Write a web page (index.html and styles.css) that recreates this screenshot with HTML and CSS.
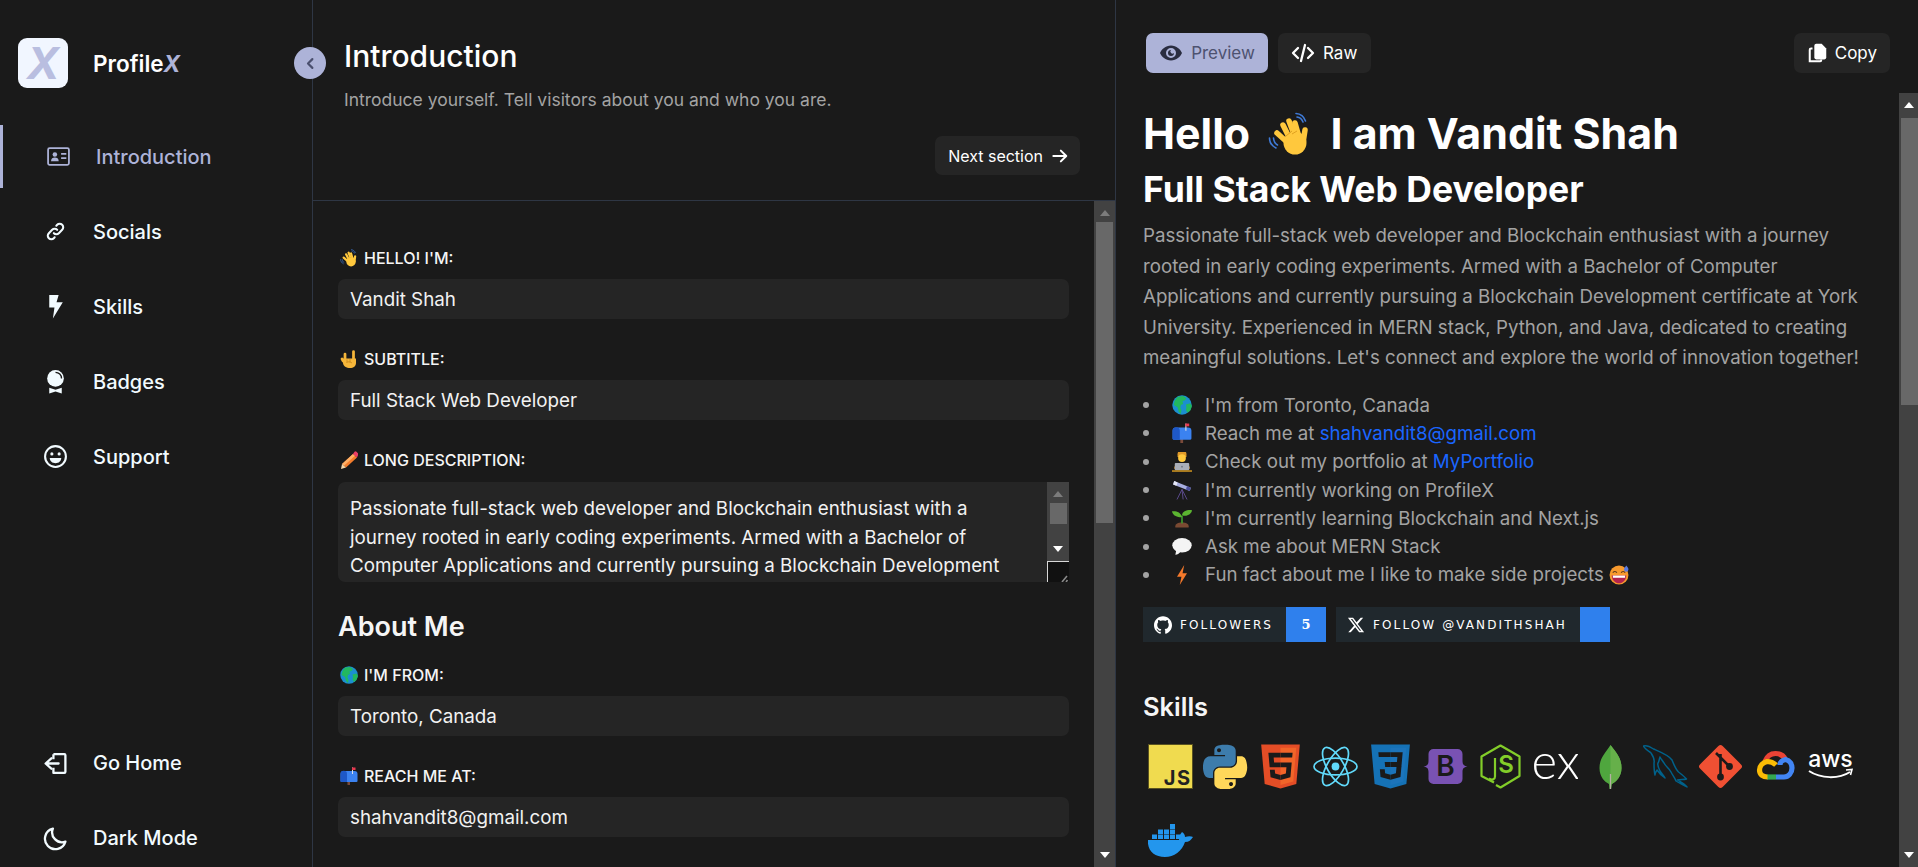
FILE: index.html
```html
<!DOCTYPE html>
<html lang="en">
<head>
<meta charset="utf-8">
<title>ProfileX</title>
<link rel="stylesheet" href="styles.css">
</head>
<body>
<svg class="defs" aria-hidden="true">
  <symbol id="e-wave" viewBox="0 0 44 44">
    <g fill="none" stroke="#ffc83d" stroke-linecap="round">
      <path stroke-width="5.5" d="M19 30 9 21"/>
      <path stroke-width="5.5" d="M22 27 15 13"/>
      <path stroke-width="5.5" d="M27 25 21 9"/>
      <path stroke-width="5.5" d="M31 25 27 11"/>
      <path stroke-width="5.5" d="M35 31 37 18"/>
    </g>
    <circle cx="27" cy="31" r="11.5" fill="#ffc83d"/>
    <path d="M18 24 24 19M24 22 29 19" stroke="#e0a020" stroke-width="1" fill="none"/>
    <g fill="none" stroke="#3f7ad6" stroke-width="1.6" stroke-linecap="round">
      <path d="M28 1.5c4 .3 8 3.2 9.5 7.5"/>
      <path d="M29 5c3 .3 5 2.5 6 5"/>
      <path d="M1.5 26c0 4 2.500 8 6.500 10"/>
      <path d="M5.500 26c.2 3 1.500 5.500 4 7"/>
    </g>
  </symbol>
  <symbol id="e-globe" viewBox="0 0 36 36">
    <circle cx="18" cy="18" r="17.500" fill="#1b8fd0"/>
    <path fill="#22b85f" d="M10 3 20 2l6 4-3 4-4 1 1 5-4 2-1 5 2 4-1 7-4-4-2-8-7-4 2-8zM25 17l8-2 3 5-3 8-5 4-3-5 1-5z"/>
  </symbol>
  <symbol id="e-mail" viewBox="0 0 36 36">
    <rect x="15" y="28" width="5" height="8" fill="#7a4a3a"/>
    <path fill="#3b82f0" d="M1 14a6 6 0 0 1 6-6h22a6 6 0 0 1 6 6v14a2 2 0 0 1-2 2H3a2 2 0 0 1-2-2z"/>
    <path fill="#1e58c8" d="M1 14a6 6 0 0 1 13 0v16H3a2 2 0 0 1-2-2z"/>
    <rect x="24" y="1" width="2" height="13" fill="#d9dde5"/>
    <rect x="24" y="1" width="7" height="5" fill="#e8384f"/>
  </symbol>
  <symbol id="e-dev" viewBox="0 0 36 36">
    <path fill="#e09a2a" d="M10 4a8 8 0 0 1 16 0v5H10z"/>
    <circle cx="18" cy="11" r="7" fill="#ffc83d"/>
    <path fill="#f2a93a" d="M4 30c0-7 7-10 14-10s14 3 14 10z"/>
    <rect x="5" y="20" width="26" height="13" rx="1.500" fill="#a9aeb8"/>
    <circle cx="18" cy="26.500" r="1.600" fill="#70757f"/>
    <path fill="#e0a020" d="M0 33h36v2.500H0z"/>
  </symbol>
  <symbol id="e-scope" viewBox="0 0 36 36">
    <path d="M18 17 9 35M18 17l2 18M18 17l9 18" stroke="#5a4a8a" stroke-width="1.800" fill="none"/>
    <path fill="#a8aee0" d="M4 2 34 14l-2 6L2 8z"/>
    <path fill="#e6e8f5" d="M4 2 10 4.400 8 10.400 2 8z"/>
    <path fill="#4b4f9a" d="M27 11l7 3-2 6-7-3z"/>
  </symbol>
  <symbol id="e-seed" viewBox="0 0 36 36">
    <path fill="#7a4a32" d="M6 33c0-5 5-7 12-7s12 2 12 7v2H6z"/>
    <path fill="none" stroke="#3e9a2e" stroke-width="3" d="M18 28V14"/>
    <path fill="#5cb531" d="M18 16C16 8 8 5 0 6c1 7 9 12 18 10zM18 13c1-7 9-10 18-9-1 7-9 12-18 9z"/>
  </symbol>
  <symbol id="e-bubble" viewBox="0 0 36 36">
    <ellipse cx="18" cy="15" rx="17.500" ry="13" fill="#f4f4f4"/>
    <path fill="#f4f4f4" d="M8 22 6 32c4 0 8-3 10-7z"/>
  </symbol>
  <symbol id="e-zap" viewBox="0 0 36 36">
    <path fill="#f4792b" d="M22 0 9 21h8l-3 15 13-21h-8z"/>
  </symbol>
  <symbol id="e-grin" viewBox="0 0 36 36">
    <circle cx="18" cy="18" r="17" fill="#f79a2e"/>
    <path d="M7 14c1-3 6-3 7 0M22 14c1-3 6-3 7 0" fill="none" stroke="#5c3a1e" stroke-width="2"/>
    <path fill="#b3234e" d="M5 19h26c0 8-6 14-13 14S5 27 5 19z"/>
    <path fill="#fff" d="M7 19h22v4H7z"/>
    <path fill="#5b7be0" d="M31 1c3 3 4 5 4 7a4 4 0 0 1-8 0c0-2 2-4 4-7z"/>
  </symbol>
  <symbol id="e-metal" viewBox="0 0 36 36">
    <g stroke="#f5b63a" stroke-width="5.500" stroke-linecap="round" fill="none">
      <path d="M10 20V8M27 20V3M6 22l-2-4"/>
    </g>
    <path fill="#f5b63a" d="M6 17h26v9c0 6-5 10-12 10S6 32 6 26z"/>
    <path d="M14 19v6M20 18v7M13 25c3-2 7-2 11 1" stroke="#c4841a" stroke-width="1.500" fill="none"/>
  </symbol>
  <symbol id="e-pencil" viewBox="0 0 36 36">
    <path fill="#f47d2c" d="M26 6 34 13 12 33 4 26z"/>
    <path fill="#ffb066" d="M26 6l4 3.500L8 29.500 4 26z"/>
    <path fill="#ea3d64" d="M29 1.500a3 3 0 0 1 4 0l3 3a3 3 0 0 1 0 4l-2 4.500-8-7z"/>
    <path fill="#f6d7a8" d="M4 26l8 7-10 3z"/>
  </symbol>
</svg>

<div class="app">
  <aside class="sidebar">
    <div class="brand">
      <div class="brand-logo">X</div>
      <div class="brand-name">Profile<em>X</em></div>
    </div>
    <button class="collapse" aria-label="Collapse">
      <svg viewBox="0 0 24 24" width="15" height="15" fill="none" stroke="#4a4f6e" stroke-width="3.400" stroke-linecap="round" stroke-linejoin="round"><path d="M15 5l-7 7 7 7"/></svg>
    </button>
    <nav class="nav">
      <a class="nav-item active">
        <svg class="nav-icon" viewBox="0 0 24 24"><rect x="2" y="4" width="20" height="16" rx="1.500" fill="none" stroke="currentColor" stroke-width="1.700"/><circle cx="8.500" cy="10" r="2.200" fill="currentColor"/><path d="M4.800 16.500c0-2.500 1.700-3.500 3.700-3.500s3.700 1 3.700 3.500z" fill="currentColor"/><path d="M14.500 9.500h5M14.500 13.500h5" stroke="currentColor" stroke-width="1.800"/></svg>
        <span>Introduction</span>
      </a>
      <a class="nav-item">
        <svg class="nav-icon" viewBox="-3 -3 30 30" fill="none" stroke="currentColor" stroke-width="2.500" stroke-linecap="round"><path d="M10 14a4.200 4.200 0 0 0 6 0l4-4a4.200 4.200 0 0 0-6-6l-1 1"/><path d="M14 10a4.200 4.200 0 0 0-6 0l-4 4a4.200 4.200 0 0 0 6 6l1-1"/></svg>
        <span>Socials</span>
      </a>
      <a class="nav-item">
        <svg class="nav-icon" viewBox="0 0 24 24" fill="currentColor"><path d="M6 1h9l-2 7h6L9.500 23.500 11 13H6z"/></svg>
        <span>Skills</span>
      </a>
      <a class="nav-item">
        <svg class="nav-icon" viewBox="0 0 24 24"><circle cx="12" cy="9" r="8" fill="currentColor"/><path d="M12 3.200a5.800 5.800 0 0 1 5.800 5.800" fill="none" stroke="#1a1a1a" stroke-width="1.300"/><path d="M6 18l6 2 6-2v5.500l-6-2-6 2z" fill="currentColor"/></svg>
        <span>Badges</span>
      </a>
      <a class="nav-item">
        <svg class="nav-icon" viewBox="0 0 24 24" fill="none" stroke="currentColor" stroke-width="2"><circle cx="12" cy="12" r="10"/><circle cx="8.500" cy="9.500" r="1.500" fill="currentColor" stroke="none"/><circle cx="15.500" cy="9.500" r="1.500" fill="currentColor" stroke="none"/><path d="M6.500 13.500h11c0 3-2.500 5-5.500 5s-5.500-2-5.500-5z" fill="currentColor" stroke="none"/></svg>
        <span>Support</span>
      </a>
    </nav>
    <nav class="nav nav-bottom">
      <a class="nav-item">
        <svg class="nav-icon" viewBox="0 0 24 24" fill="none" stroke="currentColor" stroke-width="2.200" stroke-linejoin="round"><path d="M10 3h10.500a1 1 0 0 1 1 1v16a1 1 0 0 1-1 1H10v-5M10 8V3"/><path d="M15 12H3M8 7l-5.500 5L8 17" stroke-linecap="round"/></svg>
        <span>Go Home</span>
      </a>
      <a class="nav-item">
        <svg class="nav-icon" viewBox="0 0 24 24" fill="none" stroke="currentColor" stroke-width="2.200" stroke-linejoin="round"><path d="M9.500 2.500a10 10 0 1 0 12 12.500A9.500 9.500 0 0 1 9.500 2.500z"/></svg>
        <span>Dark Mode</span>
      </a>
    </nav>
  </aside>

  <main class="editor">
    <header class="editor-head">
      <h1 class="editor-title">Introduction</h1>
      <p class="editor-sub">Introduce yourself. Tell visitors about you and who you are.</p>
      <div class="editor-actions">
        <button class="btn btn-next">Next section
          <svg viewBox="0 0 24 24" width="20" height="20" fill="none" stroke="currentColor" stroke-width="2.400" stroke-linecap="round" stroke-linejoin="round"><path d="M4 12h15M13 5.500 19.500 12 13 18.500"/></svg>
        </button>
      </div>
    </header>
    <div class="editor-body">
      <form class="form">
        <label class="label"><svg class="emo"><use href="#e-wave"/></svg>HELLO! I'M:</label>
        <div class="field">Vandit Shah</div>
        <label class="label"><svg class="emo"><use href="#e-metal"/></svg>SUBTITLE:</label>
        <div class="field">Full Stack Web Developer</div>
        <label class="label"><svg class="emo"><use href="#e-pencil"/></svg>LONG DESCRIPTION:</label>
        <div class="area">
          <div class="area-text">Passionate full-stack web developer and Blockchain enthusiast with a journey rooted in early coding experiments. Armed with a Bachelor of Computer Applications and currently pursuing a Blockchain Development</div>
          <div class="area-side">
            <div class="bar bar-small">
              <i class="arrow up dim"></i>
              <b class="thumb small"></b>
              <i class="arrow down"></i>
            </div>
            <div class="resizer"><svg viewBox="0 0 21 21" width="21" height="21"><path d="M14 20l5-6M18 20l1.500-2" stroke="#8a8a8a" stroke-width="1.600"/></svg></div>
          </div>
        </div>
        <h2 class="form-head">About Me</h2>
        <label class="label"><svg class="emo"><use href="#e-globe"/></svg>I'M FROM:</label>
        <div class="field">Toronto, Canada</div>
        <label class="label"><svg class="emo"><use href="#e-mail"/></svg>REACH ME AT:</label>
        <div class="field">shahvandit8@gmail.com</div>
      </form>
      <div class="bar bar-main">
        <i class="arrow up dim"></i>
        <b class="thumb thumb-form"></b>
        <i class="arrow down"></i>
      </div>
    </div>
  </main>

  <section class="preview">
    <div class="preview-tools">
      <button class="btn btn-tool btn-on">
        <svg viewBox="0 0 24 24" width="24" height="24"><path fill="#2a2d40" fill-rule="evenodd" d="M12 4.500C6.500 4.500 2.500 8.500 1 12c1.500 3.500 5.500 7.500 11 7.500S21.500 15.500 23 12c-1.500-3.500-5.500-7.500-11-7.500zM12 17a5 5 0 1 1 0-10 5 5 0 0 1 0 10zm0-8a3 3 0 1 0 3 3 1.500 1.500 0 0 1-3-3z"/></svg>
        <span class="btn-on-text">Preview</span>
      </button>
      <button class="btn btn-tool btn-raw">
        <svg viewBox="0 0 24 24" width="24" height="24" fill="none" stroke="currentColor" stroke-width="2.300" stroke-linecap="round" stroke-linejoin="round"><path d="M7 7l-5 5 5 5M17 7l5 5-5 5M14 4l-4 16"/></svg>
        Raw
      </button>
      <button class="btn btn-tool btn-copy">
        <svg viewBox="0 0 24 24" width="22" height="22"><path fill="#fff" d="M10 2h6l5 5v10a2 2 0 0 1-2 2h-9a2 2 0 0 1-2-2V4a2 2 0 0 1 2-2z"/><path fill="none" stroke="#fff" stroke-width="2.200" d="M6 7H4.500a1.500 1.500 0 0 0-1.500 1.500V21h11.500a1 1 0 0 0 1-1v-1"/></svg>
        Copy
      </button>
    </div>
    <div class="preview-body">
      <article class="doc">
        <h1 class="doc-h1">Hello <svg class="emo-big"><use href="#e-wave"/></svg> I am Vandit Shah</h1>
        <h2 class="doc-h2">Full Stack Web Developer</h2>
        <p class="doc-p">Passionate full-stack web developer and Blockchain enthusiast with a journey rooted in early coding experiments. Armed with a Bachelor of Computer Applications and currently pursuing a Blockchain Development certificate at York University. Experienced in MERN stack, Python, and Java, dedicated to creating meaningful solutions. Let's connect and explore the world of innovation together!</p>
        <ul class="doc-list">
          <li><svg class="emo-list"><use href="#e-globe"/></svg>I'm from Toronto, Canada</li>
          <li><svg class="emo-list"><use href="#e-mail"/></svg>Reach me at&nbsp;<a class="link">shahvandit8@gmail.com</a></li>
          <li><svg class="emo-list"><use href="#e-dev"/></svg>Check out my portfolio at&nbsp;<a class="link">MyPortfolio</a></li>
          <li><svg class="emo-list"><use href="#e-scope"/></svg>I'm currently working on ProfileX</li>
          <li><svg class="emo-list"><use href="#e-seed"/></svg>I'm currently learning Blockchain and Next.js</li>
          <li><svg class="emo-list"><use href="#e-bubble"/></svg>Ask me about MERN Stack</li>
          <li><svg class="emo-list"><use href="#e-zap"/></svg>Fun fact about me I like to make side projects&nbsp;<svg class="emo-inline"><use href="#e-grin"/></svg></li>
        </ul>
        <div class="badges">
          <div class="badge">
            <span class="badge-key">
              <svg viewBox="0 0 24 24" width="18" height="18" fill="#fff"><path d="M12 .297c-6.630 0-12 5.373-12 12 0 5.303 3.438 9.800 8.205 11.385.6.113.82-.258.82-.577 0-.285-.01-1.040-.015-2.040-3.338.724-4.042-1.610-4.042-1.610C4.422 18.070 3.633 17.700 3.633 17.700c-1.087-.744.084-.729.084-.729 1.205.084 1.838 1.236 1.838 1.236 1.070 1.835 2.809 1.305 3.495.998.108-.776.417-1.305.76-1.605-2.665-.3-5.466-1.332-5.466-5.930 0-1.310.465-2.380 1.235-3.220-.135-.303-.54-1.523.105-3.176 0 0 1.005-.322 3.300 1.230.96-.267 1.980-.399 3-.405 1.020.006 2.040.138 3 .405 2.280-1.552 3.285-1.230 3.285-1.230.645 1.653.24 2.873.12 3.176.765.84 1.230 1.910 1.230 3.220 0 4.610-2.805 5.625-5.475 5.920.42.36.81 1.096.81 2.220 0 1.606-.015 2.896-.015 3.286 0 .315.21.69.825.57C20.565 22.092 24 17.592 24 12.297c0-6.627-5.373-12-12-12"/></svg>
              FOLLOWERS
            </span>
            <span class="badge-val">5</span>
          </div>
          <div class="badge">
            <span class="badge-key">
              <svg viewBox="0 0 24 24" width="18" height="18" fill="#fff"><path d="M18.244 2.250h3.308l-7.227 8.260 8.502 11.240H16.170l-5.214-6.817L4.990 21.750H1.680l7.730-8.835L1.254 2.250H8.080l4.713 6.231zm-1.161 17.520h1.833L7.084 4.126H5.117z"/></svg>
              FOLLOW @VANDITHSHAH
            </span>
            <span class="badge-val badge-empty"></span>
          </div>
        </div>
        <h3 class="doc-h3">Skills</h3>
        <div class="skills">
          <svg class="skill" viewBox="0 0 45 45"><rect x=".5" y=".5" width="44" height="44" fill="#f0db4f" stroke="#5a5320"/><text x="43.500" y="41" class="t-js" text-anchor="end">JS</text></svg>
          <svg class="skill" viewBox="13 0 104 104"><path fill="#3d7cac" d="M63.391 1.988c-4.222.02-8.252.379-11.800 1.007-10.450 1.846-12.346 5.710-12.346 12.837v9.411h24.693v3.137H29.977c-7.176 0-13.460 4.313-15.426 12.521-2.268 9.405-2.368 15.275 0 25.096 1.755 7.311 5.947 12.519 13.124 12.519h8.491V67.234c0-8.151 7.051-15.340 15.426-15.340h24.665c6.866 0 12.346-5.654 12.346-12.548V15.833c0-6.693-5.646-11.720-12.346-12.837-4.244-.706-8.645-1.027-12.866-1.008zM50.037 9.557c2.550 0 4.634 2.117 4.634 4.721 0 2.593-2.083 4.690-4.634 4.690-2.560 0-4.633-2.097-4.633-4.690-.001-2.604 2.073-4.721 4.633-4.721z"/><path fill="#ffd75a" d="M91.682 28.380v10.966c0 8.500-7.208 15.655-15.426 15.655H51.591c-6.756 0-12.346 5.783-12.346 12.549v23.515c0 6.691 5.818 10.628 12.346 12.547 7.816 2.297 15.312 2.713 24.665 0 6.216-1.801 12.346-5.423 12.346-12.547v-9.412H63.938v-3.138h37.012c7.176 0 9.852-5.005 12.348-12.519 2.578-7.735 2.467-15.174 0-25.096-1.774-7.145-5.161-12.521-12.348-12.521h-9.268zM77.809 87.927c2.561 0 4.634 2.097 4.634 4.692 0 2.602-2.074 4.719-4.634 4.719-2.550 0-4.633-2.117-4.633-4.719 0-2.595 2.083-4.692 4.633-4.692z"/></svg>
          <svg class="skill" viewBox="0 0 128 128"><path fill="#e44d26" d="M19.037 113.876L9.032 1.661h109.936l-10.016 112.198-45.019 12.480z"/><path fill="#f16529" d="M64 116.800l36.378-10.086 8.559-95.878H64z"/><path fill="#1a1a1a" d="M64 52.455H45.788L44.530 38.361H64V24.599H29.489l.33 3.692 3.382 37.927H64zm0 35.743l-.061.017-15.327-4.140-.979-10.975H33.816l1.928 21.609 28.193 7.826.063-.017z"/><path fill="#1a1a1a" d="M63.952 52.455v13.763h16.947l-1.597 17.849-15.350 4.143v14.319l28.215-7.820.207-2.325 3.234-36.233.335-3.696h-3.708zm0-27.856v13.762h33.244l.276-3.092.628-6.978.329-3.692z"/></svg>
          <svg class="skill" viewBox="0 0 45 45" fill="none" stroke="#61dafb" stroke-width="1.700"><circle cx="22.500" cy="22.500" r="3.900" fill="#61dafb" stroke="none"/><ellipse cx="22.500" cy="22.500" rx="21.500" ry="8.400"/><ellipse cx="22.500" cy="22.500" rx="21.500" ry="8.400" transform="rotate(60 22.500 22.500)"/><ellipse cx="22.500" cy="22.500" rx="21.500" ry="8.400" transform="rotate(120 22.500 22.500)"/></svg>
          <svg class="skill" viewBox="0 0 128 128"><path fill="#1572b6" d="M18.814 114.123L8.760 1.352h110.480l-10.064 112.754-45.243 12.543-45.119-12.526z"/><path fill="#1c74bb" d="M64.001 117.062l36.559-10.136 8.601-96.354h-45.160v106.490z"/><path fill="#1a1a1a" d="M64.001 51.429h18.302l1.264-14.163H64.001V23.435h34.682l-.332 3.711-3.400 38.114h-30.950V51.429z"/><path fill="#1a1a1a" d="M64.083 87.349l-.061.018-15.403-4.159-.985-11.031H33.752l1.937 21.717 28.331 7.863.063-.018v-14.390z"/><path fill="#1a1a1a" d="M81.127 64.675l-1.666 18.522-15.426 4.164v14.390l28.354-7.858.208-2.337 2.406-26.881H81.127z"/><path fill="#1a1a1a" d="M64.048 23.435v13.831H30.640l-.277-3.108-.63-7.012-.331-3.711h34.646zm-.047 27.996v13.831H48.792l-.277-3.108-.631-7.012-.33-3.711h16.447z"/></svg>
          <svg class="skill" viewBox="0 0 45 45"><path fill="#7952b3" d="M5.500 10a5 5 0 0 1 5-5h24a5 5 0 0 1 5 5v7c0 3 1 5 5 5.500-4 .5-5 2.500-5 5.500v7a5 5 0 0 1-5 5h-24a5 5 0 0 1-5-5v-7c0-3-1-5-5-5.500 4-.5 5-2.500 5-5.500z"/><text x="22.500" y="32" class="t-boot" text-anchor="middle">B</text></svg>
          <svg class="skill" viewBox="0 0 45 45"><path fill="none" stroke="#83cd29" stroke-width="2.200" stroke-linejoin="round" d="M16 38.500 3.500 32V12.500L22.500 1.500l19 11V32l-19 11.500-4.500-2.500"/><path fill="none" stroke="#83cd29" stroke-width="2.200" d="M17 14v18.500c0 3-3 4-6 2"/><text x="28" y="29" class="t-node" text-anchor="middle">S</text></svg>
          <svg class="skill" viewBox="0 0 45 45"><text x="22.500" y="35" class="t-ex" text-anchor="middle">ex</text></svg>
          <svg class="skill" viewBox="0 0 45 45"><path fill="#4fa63e" d="M22.500 1c6 8 11 13 11 23 0 9-6 14-9.500 16l-1 5h-1.500l-.5-5c-4-2-9.500-7-9.500-16 0-10 6-15 11-23z"/><path fill="#66b04a" d="M22.500 1c6 8 11 13 11 23 0 9-6 14-9.500 16l-1.500 0z"/><path stroke="#b4b0a4" stroke-width="1.300" d="M22.500 30v15"/></svg>
          <svg class="skill" viewBox="0 0 45 45"><path fill="none" stroke="#00618a" stroke-width="1.500" stroke-linejoin="round" d="M.5 2c3-1 7 1 10 3 7 3 15 6 18.500 11 2 5 3.500 9 6.500 12 3 2 5 4 8 7-3 1-6 0-9 1 3 2 7 4 9.500 7-3-2-8-4-11-6-1-3-3-5-5-9-2-4-5-5-7-9-2-3-3-4-4-6-1 3-1 5-2 6-1 2 0 4 2 8 2 3 4 5 5 7-3-2-6-5-8-8-1 2-2 3-2 5-1-4-1-8-1-12 1-4-1-7-3-10C4 6 1 4 .5 2z"/></svg>
          <svg class="skill" viewBox="0 0 45 45"><rect x="6.500" y="6.500" width="32" height="32" rx="3" fill="#f05033" transform="rotate(45 22.500 22.500)"/><path d="M22.500 10v24M18 9l13 13" stroke="#1a1a1a" stroke-width="2.600" fill="none"/><circle cx="22.500" cy="33" r="3.400" fill="#1a1a1a"/><circle cx="31.500" cy="22.500" r="3.400" fill="#1a1a1a"/></svg>
          <svg class="skill" viewBox="0 0 45 45" fill="none" stroke-width="5.200"><path stroke="#ea4335" d="M12 17.500C14 12 18 9.500 22.500 9.500S31 12 33 16.500"/><path stroke="#4285f4" d="M27 21c0-3 2.500-5 5.500-5.500 4.500 1 6.500 5 6.500 8.500 0 5-3.500 9-8 9h-8"/><path stroke="#34a853" d="M23 33H14"/><path stroke="#fbbc05" d="M23 21c-3-3-6-3.500-9-3.500-4 1-7.500 4-7.500 8.500s3.500 7 8 7"/></svg>
          <svg class="skill" viewBox="0 0 45 45"><text x="22.500" y="23" class="t-aws" text-anchor="middle">aws</text><path d="M1 27c12 8 30 8 41 1" fill="none" stroke="#fff" stroke-width="2"/><path d="M38 26l6-.5-1.500 5.500" fill="none" stroke="#fff" stroke-width="1.600"/></svg>
          <svg class="skill" viewBox="0 0 45 45"><path fill="#2396ed" d="M0 21h31c0-3 1-6 3-8 2 1 3 3 3 5 3-1 6-1 8 0-2 3-4 5-8 5-3 9-11 15-20 15C6 38-1 31 0 21z"/><g fill="#2396ed"><rect x="4" y="15.500" width="5" height="4.500"/><rect x="10" y="15.500" width="5" height="4.500"/><rect x="16" y="15.500" width="5" height="4.500"/><rect x="22" y="15.500" width="5" height="4.500"/><rect x="28" y="15.500" width="5" height="4.500"/><rect x="10" y="10.500" width="5" height="4.500"/><rect x="16" y="10.500" width="5" height="4.500"/><rect x="22" y="10.500" width="5" height="4.500"/><rect x="22" y="5" width="5" height="5"/></g></svg>
        </div>
      </article>
      <div class="bar bar-doc">
        <i class="arrow up"></i>
        <b class="thumb thumb-doc"></b>
        <i class="arrow down"></i>
      </div>
    </div>
  </section>
</div>
</body>
</html>
```
FILE: styles.css
```css
* { box-sizing: border-box; }
html, body { margin: 0; height: 100%; overflow: hidden; }
body {
  background: #1a1a1a;
  color: #f5f5f5;
  font-family: Inter, "Noto Sans", sans-serif;
}
.defs { position: absolute; width: 0; height: 0; }
.app { display: flex; height: 867px; }

/* sidebar */
.sidebar {
  position: relative;
  flex: 0 0 313px;
  border-right: 1px solid #2e3644;
  padding-top: 38px;
  z-index: 2;
}
.brand { display: flex; align-items: center; padding-left: 18px; gap: 25px; height: 50px; }
.brand-logo {
  width: 50px; height: 50px;
  border-radius: 9px;
  background: #f1f6ff;
  color: #b9bee0;
  font-size: 44px; font-weight: 700; font-style: italic;
  display: flex; align-items: center; justify-content: center;
}
.brand-name { font-size: 22.5px; font-weight: 600; color: #fff; }
.brand-name em { color: #adb3d8; font-weight: 700; }
.collapse {
  position: absolute; left: 294px; top: 47px;
  width: 32px; height: 32px;
  border: 0; border-radius: 50%; padding: 0;
  background: #adb3d8;
  display: flex; align-items: center; justify-content: center;
}
.nav { display: flex; flex-direction: column; gap: 12px; margin-top: 37px; }
.nav-bottom { margin-top: 243.5px; }
.nav-item {
  display: flex; align-items: center;
  height: 63px;
  padding-left: 43px; gap: 25px;
  font-size: 20px; font-weight: 500;
  color: #f2fbff;
}
.nav-icon { width: 25px; height: 25px; flex: none; }
.nav-item.active { color: #adb3d8; border-left: 3px solid #adb3d8; }

/* editor */
.editor {
  flex: 0 0 803px;
  border-right: 1px solid #2e3644;
  display: flex; flex-direction: column;
  min-height: 0;
}
.editor-head {
  height: 201px;
  padding: 37px 35px 0 31px;
  border-bottom: 1px solid #2e3644;
}
.editor-title { margin: 0; font-size: 30px; font-weight: 500; line-height: 38px; color: #fff; }
.editor-sub { margin: 13px 0 0; font-size: 17.5px; line-height: 24px; color: #a3a3a3; }
.editor-actions { display: flex; justify-content: flex-end; margin-top: 24px; }
.btn {
  display: inline-flex; align-items: center; justify-content: center; gap: 8px;
  height: 40px; padding: 0 13px;
  border: 0; border-radius: 7px;
  background: #252525;
  color: #fff;
  font-family: inherit; font-size: 16px; font-weight: 400;
}
.btn-next { height: 39px; gap: 7px; padding: 0 10px 0 13px; }
.btn-tool { font-size: 17px; }
.btn-raw { padding: 0 14px 0 13px; }
.editor-body { flex: 1; min-height: 0; display: flex; }
.form { flex: 1; min-width: 0; padding: 45px 25px 0 25px; }
.label {
  display: flex; align-items: center; gap: 6px;
  height: 24px; margin: 0 0 9px;
  font-size: 16px; font-weight: 500; color: #f5f5f5;
}
.emo { width: 18px; height: 18px; flex: none; margin-left: 2px; }
.field {
  height: 40px; line-height: 41.5px;
  padding: 0 12px;
  margin-bottom: 28px;
  border-radius: 7px;
  background: #252525;
  font-size: 18.8px; color: #f2f2f2;
}
.area {
  display: flex; height: 100px;
  margin-top: 10px;
  border-radius: 7px 0 0 7px;
  background: #252525;
  overflow: hidden;
}
.area-text {
  flex: 1; min-width: 0;
  padding: 13px 12px 0;
  font-size: 18.8px; line-height: 28.5px; color: #f2f2f2;
}
.area-side { flex: 0 0 21px; display: flex; flex-direction: column; }
.resizer { height: 21px; background: #111; border-top: 1px solid #d8d8d8; border-left: 1px solid #d8d8d8; display: flex; }
.form-head { margin: 27px 0 18px; font-size: 27px; font-weight: 600; line-height: 36px; color: #f5f5f5; }

/* scrollbars */
.bar {
  flex: none;
  display: flex; flex-direction: column; align-items: center;
  background: #424242;
}
.bar-main { width: 21px; }
.bar-small { flex: 1; }
.bar-doc { width: 19px; margin-left: auto; }
.arrow { flex: none; width: 0; height: 0; border-left: 5px solid transparent; border-right: 5px solid transparent; display: block; }
.arrow.up { border-bottom: 6px solid #fff; margin: 9px 0 6px; }
.arrow.down { border-top: 6px solid #fff; margin: auto 0 9px; }
.arrow.dim { border-bottom-color: #7c7c7c; }
.thumb { display: block; flex: none; background: #686868; width: 17px; }
.thumb.small { height: 21px; }
.thumb-form { height: 301px; }
.thumb-doc { height: 287px; }
.bar-doc .arrow.up { margin-bottom: 10px; }
.bar-doc .thumb { margin-left: 2px; }

/* preview */
.preview { flex: 1; min-width: 0; display: flex; flex-direction: column; }
.preview-tools { flex: none; display: flex; gap: 10px; height: 93px; padding: 33px 28px 0 30px; }
.btn-on { background: #adb3d8; width: 122px; }
.btn-on-text { color: #4d5270; }
.btn-copy { margin-left: auto; gap: 6px; }
.preview-body { flex: 1; min-height: 0; display: flex; }
.doc { flex: 1; min-width: 0; padding: 16px 24px 0 27px; color: #a3a3a3; }
.doc-h1 { margin: 0; font-size: 42.9px; font-weight: 700; line-height: 48px; color: #fff; display: flex; align-items: center; white-space: pre; }
.emo-big { width: 44px; height: 44px; flex: none; margin: 2px 8px 0 8px; }
.doc-h2 { margin: 11px 0 0; font-size: 35.5px; font-weight: 700; line-height: 44px; color: #fff; }
.doc-p { margin: 9px 0 0; font-size: 18.7px; line-height: 30.6px; }
.doc-list { list-style: none; margin: 17px 0 0; padding: 0; font-size: 18.7px; }
.doc-list li { display: flex; align-items: center; height: 28.3px; white-space: pre; }
.doc-list li::before { content: ""; width: 6px; height: 6px; border-radius: 50%; background: #a3a3a3; margin: 0 23px 0 0; flex: none; }
.emo-list { width: 20px; height: 20px; flex: none; margin-right: 13px; }
.emo-inline { width: 20px; height: 20px; flex: none; }
.link { color: #1a66ff; }
.badges { display: flex; gap: 10px; margin-top: 18px; }
.badge { display: flex; height: 35px; font-family: "DejaVu Sans", sans-serif; font-size: 12px; letter-spacing: 2.1px; color: #fff; }
.badge-key { display: flex; align-items: center; gap: 8px; background: #20282d; padding: 0 13px 0 11px; white-space: nowrap; }
.badge-val { display: flex; align-items: center; justify-content: center; width: 40px; background: #2f80ed; font-family: "DejaVu Serif", serif; font-size: 13px; font-weight: 700; letter-spacing: 0; }
.badge-empty { width: 30px; }
.doc-h3 { margin: 49px 0 0; font-size: 25.5px; font-weight: 600; line-height: 32px; color: #f5f5f5; }
.skills { display: flex; flex-wrap: wrap; column-gap: 10px; row-gap: 30px; margin-top: 21px; padding-left: 5px; }
.skill { width: 45px; height: 45px; flex: none; }
.skill text { font-family: Inter, sans-serif; }
.t-js { font-size: 20px; font-weight: 700; fill: #222; letter-spacing: 1.5px; }
.t-boot { font-size: 28px; font-weight: 600; fill: #1a1a1a; }
.t-node { font-size: 24px; font-weight: 600; fill: #83cd29; }
.skill .t-ex { font-family: Lato, sans-serif; font-size: 49px; font-weight: 300; fill: #fff; }
.t-aws { font-size: 23px; font-weight: 500; fill: #fff; }
```
